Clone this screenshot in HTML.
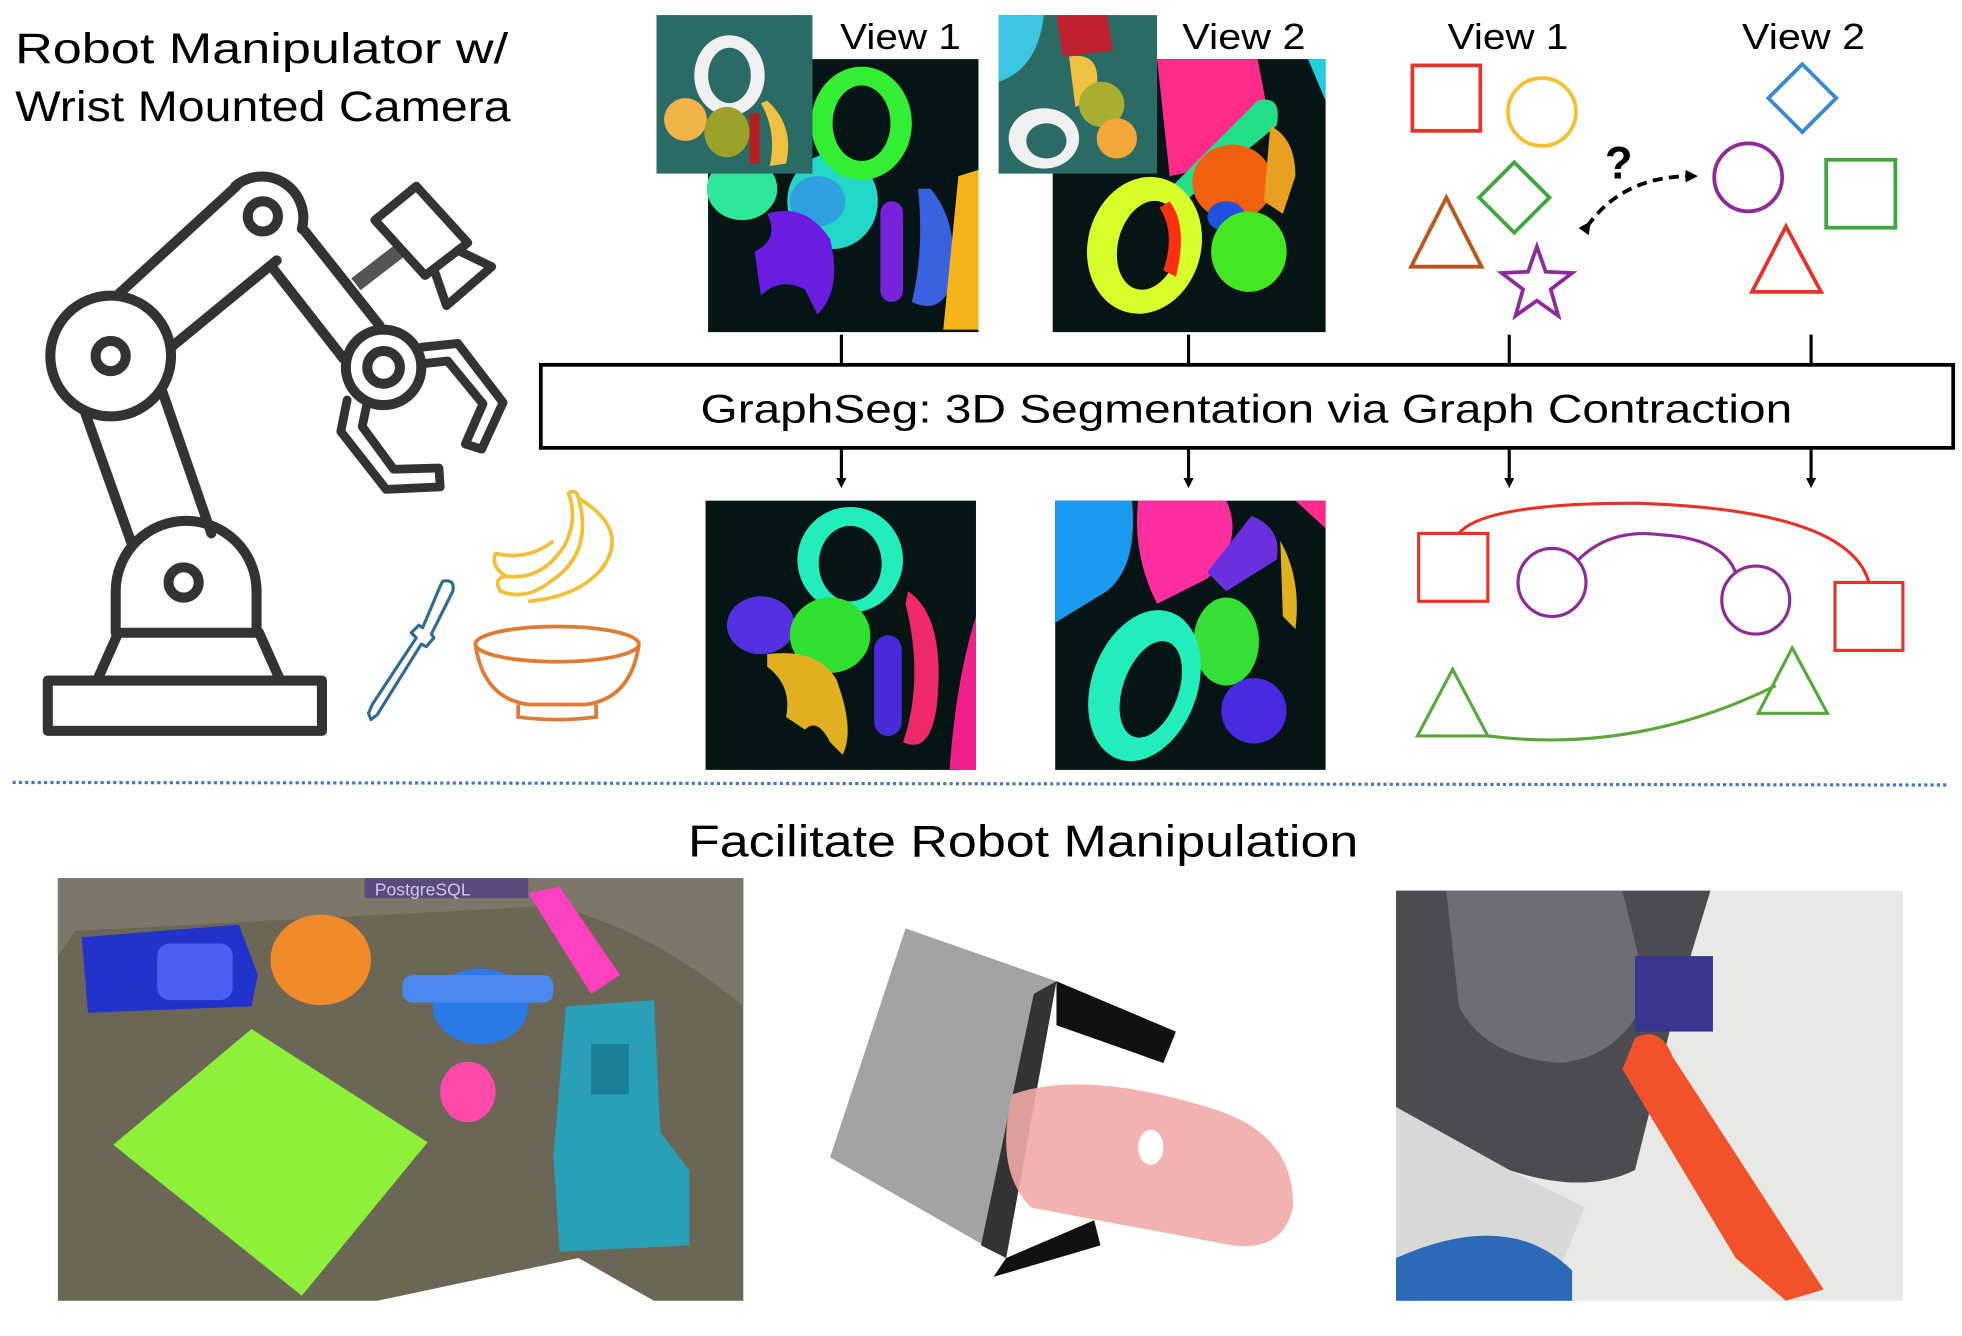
<!DOCTYPE html>
<html><head><meta charset="utf-8"><style>
html,body{margin:0;padding:0;background:#fff;width:1962px;height:1336px;overflow:hidden}
svg{display:block}
text{font-family:"Liberation Sans",sans-serif}
</style></head><body>
<svg width="1962" height="1336" viewBox="0 0 1560 1062" preserveAspectRatio="none" xmlns="http://www.w3.org/2000/svg">
<defs>
<marker id="ah" markerWidth="8" markerHeight="8" refX="4" refY="4" orient="auto" markerUnits="userSpaceOnUse"><path d="M0,0 L8,4 L0,8 Z" fill="#000"/></marker>
<marker id="ah2" markerWidth="10" markerHeight="10" refX="5" refY="5" orient="auto" markerUnits="userSpaceOnUse"><path d="M0,0 L10,5 L0,10 Z" fill="#000"/></marker>
</defs>
<rect width="1560" height="1062" fill="#fff"/>
<!-- title -->
<text x="12" y="50" font-size="34" fill="#000" textLength="392" lengthAdjust="spacingAndGlyphs">Robot Manipulator w/</text>
<text x="12" y="96" font-size="34" fill="#000" textLength="394" lengthAdjust="spacingAndGlyphs">Wrist Mounted Camera</text>

<!-- robot arm -->
<g fill="none" stroke="#333" stroke-width="8" stroke-linejoin="round" stroke-linecap="round">
<rect x="38" y="541" width="218" height="40"/>
<path d="M78,539 L94,503 L206,503 L222,539"/>
<path d="M92,503 L92,470 A56,56 0 0 1 204,470 L204,503"/>
<circle cx="146" cy="463" r="12"/>
<path d="M68,329 L105,433 M129,311 L168,424"/>
<circle cx="88" cy="283" r="48" fill="#fff"/>
<circle cx="88" cy="283" r="12"/>
<path d="M94,234 L188,148 M136,276 L220,207"/>
<path d="M187,148 A33,33 0 0 1 240,182"/>
<circle cx="209" cy="172" r="12"/>
<path d="M241,182 L302,259 M216,212 L273,285"/>
<circle cx="305" cy="292" r="30" fill="#fff"/>
<circle cx="305" cy="292" r="13"/>
<path d="M335,276 L364,273 L400,320 L383,357 L370,353 L384,321 L356,287 L337,289" stroke-width="7"/>
<path d="M276,318 L271,343 L307,389 L350,387 L349,372 L313,373 L288,339 L292,320" stroke-width="7"/>
<line x1="283" y1="226" x2="318" y2="199" stroke="#555" stroke-width="12" stroke-linecap="butt"/>
<path d="M298,175 L331,148 L372,193 L338,219 Z" stroke-width="7"/>
<path d="M345,214 L355,243 L391,212 L364,199" stroke-width="7"/>
</g>

<!-- screwdriver -->
<g fill="none" stroke="#2e6a92" stroke-width="2.5" stroke-linejoin="round">
<path d="M352,462 Q362,460 360,470 L343,504 L345,507 L339,514 L335,512 L300,568 L295,572 L293,567 L296,560 L331,507 L327,503 L333,497 L336,499 L350,466 Z"/>
</g>
<!-- banana -->
<g fill="none" stroke="#f2bf38" stroke-width="3" stroke-linejoin="round">
<path d="M452,392 Q458,388 460,396 Q472,440 438,462 Q418,478 398,470 Q392,460 402,458 Q430,462 448,435 Q460,414 452,392 Z"/>
<path d="M402,458 Q390,450 394,440 Q420,446 440,430"/>
<path d="M460,396 Q500,420 480,450 Q462,474 420,478"/>
</g>
<!-- bowl -->
<g fill="none" stroke="#e07a35" stroke-width="3">
<ellipse cx="443" cy="512" rx="65" ry="14"/>
<path d="M378,512 Q384,555 420,560 L466,560 Q502,555 508,512"/>
<path d="M412,560 L412,570 Q443,574 474,570 L474,560"/>
</g>

<!-- top view 1 seg -->
<rect x="563" y="47" width="215" height="217" fill="#051414"/>
<ellipse cx="590" cy="150" rx="28" ry="25" fill="#2ee89a"/>
<ellipse cx="662" cy="160" rx="36" ry="38" fill="#20d7c8"/>
<ellipse cx="650" cy="160" rx="22" ry="20" fill="#2ea0e0"/>
<path d="M610,170 Q640,160 660,190 Q670,230 650,250 L640,230 Q620,220 605,235 L600,200 Q620,190 610,170 Z" fill="#6a1de0"/>
<path d="M740,150 Q765,180 755,230 Q745,250 725,240 Q735,200 730,150 Z" fill="#3a62e0"/>
<rect x="700" y="160" width="18" height="80" rx="9" fill="#7722dd"/>
<path d="M762,140 L778,135 L778,262 L750,262 Z" fill="#f4b41a"/>
<ellipse cx="685" cy="98" rx="40" ry="45" fill="#33ee33"/>
<ellipse cx="685" cy="98" rx="23" ry="30" fill="#051414"/>
<!-- thumbnail 1 -->
<rect x="522" y="12" width="124" height="126" fill="#2b6b65"/>
<ellipse cx="580" cy="60" rx="28" ry="32" fill="#f0f0f0"/>
<ellipse cx="580" cy="60" rx="17" ry="22" fill="#2b6b65"/>
<circle cx="545" cy="95" r="17" fill="#f2b44a"/>
<ellipse cx="578" cy="105" rx="18" ry="20" fill="#9aa22a"/>
<path d="M610,80 Q632,100 625,130 L612,132 Q618,105 605,82 Z" fill="#f0c040"/>
<rect x="596" y="90" width="8" height="40" fill="#b32020"/>
<text x="668" y="39" font-size="29" textLength="96" lengthAdjust="spacingAndGlyphs">View 1</text>

<!-- top view 2 seg -->
<rect x="837" y="47" width="217" height="217" fill="#051414"/>
<path d="M920,47 L1000,47 L1010,100 L980,130 L930,140 Z" fill="#ff2a8a"/>
<path d="M1040,47 L1054,47 L1054,80 Z" fill="#20d0e0"/>
<path d="M1000,80 Q1020,75 1015,100 L930,170 L920,160 Z" fill="#22e08a"/>
<ellipse cx="980" cy="145" rx="32" ry="30" fill="#f06010"/>
<ellipse cx="975" cy="172" rx="15" ry="12" fill="#2050e0"/>
<ellipse cx="993" cy="200" rx="30" ry="32" fill="#44e822"/>
<path d="M1010,100 Q1030,110 1030,140 L1020,170 L1005,160 Z" fill="#e8a020"/>
<ellipse cx="910" cy="195" rx="45" ry="55" transform="rotate(15 910 195)" fill="#d8ff2a"/>
<ellipse cx="913" cy="195" rx="24" ry="36" transform="rotate(15 913 195)" fill="#051414"/>
<path d="M930,160 Q945,180 935,220 L925,215 Q935,185 922,165 Z" fill="#ff3010"/>
<!-- thumbnail 2 -->
<rect x="794" y="12" width="126" height="126" fill="#2b6b65"/>
<path d="M794,12 L830,12 Q825,55 794,65 Z" fill="#3bc5e0"/>
<path d="M840,12 L880,12 L885,40 L845,45 Z" fill="#c02030"/>
<path d="M850,45 Q880,40 870,80 L855,85 Z" fill="#f0c040"/>
<ellipse cx="830" cy="110" rx="28" ry="24" fill="#f0f0f0"/>
<ellipse cx="832" cy="112" rx="16" ry="14" fill="#2b6b65"/>
<ellipse cx="876" cy="83" rx="18" ry="18" fill="#a8ae30"/>
<ellipse cx="888" cy="110" rx="16" ry="16" fill="#f2a838"/>
<text x="940" y="39" font-size="29" textLength="98" lengthAdjust="spacingAndGlyphs">View 2</text>

<!-- shapes views -->
<text x="1151" y="39" font-size="29" textLength="96" lengthAdjust="spacingAndGlyphs">View 1</text>
<text x="1385" y="39" font-size="29" textLength="98" lengthAdjust="spacingAndGlyphs">View 2</text>
<g fill="none" stroke-width="3">
<rect x="1123" y="52" width="54" height="52" stroke="#e6332a"/>
<circle cx="1226" cy="89" r="27" stroke="#f4c12e"/>
<path d="M1204,129 L1232,157 L1204,185 L1176,157 Z" stroke="#3ea83e"/>
<path d="M1150,157 L1122,212 L1178,212 Z" stroke="#b8561c"/>
<path d="M1222,196 L1229,216 L1250,217 L1233,230 L1239,251 L1222,239 L1205,251 L1211,230 L1194,217 L1215,216 Z" stroke="#8e2a9a"/>
<path d="M1433,51 L1460,78 L1433,105 L1406,78 Z" stroke="#3a8ad0"/>
<circle cx="1390" cy="141" r="27" stroke="#8e2a9a"/>
<rect x="1452" y="127" width="55" height="54" stroke="#3ea83e"/>
<path d="M1420,180 L1393,232 L1448,232 Z" stroke="#e6332a"/>
<path d="M1262,180 Q1290,140 1345,140" stroke="#000" stroke-width="3" stroke-dasharray="8,5" marker-end="url(#ah2)" marker-start="url(#ah2)"/>
</g>
<text x="1287" y="142" font-size="36" font-weight="bold" text-anchor="middle">?</text>

<!-- connectors -->
<g stroke="#000" stroke-width="2.5">
<line x1="669" y1="266" x2="669" y2="290"/><line x1="945" y1="266" x2="945" y2="290"/>
<line x1="1200" y1="266" x2="1200" y2="290"/><line x1="1440" y1="266" x2="1440" y2="290"/>
<line x1="669" y1="356" x2="669" y2="384" marker-end="url(#ah)"/><line x1="945" y1="356" x2="945" y2="384" marker-end="url(#ah)"/>
<line x1="1200" y1="356" x2="1200" y2="384" marker-end="url(#ah)"/><line x1="1440" y1="356" x2="1440" y2="384" marker-end="url(#ah)"/>
</g>
<rect x="430" y="290" width="1123" height="66" fill="#fff" stroke="#000" stroke-width="3"/>
<text x="557" y="336" font-size="32" textLength="868" lengthAdjust="spacingAndGlyphs">GraphSeg: 3D Segmentation via Graph Contraction</text>

<!-- bottom seg 1 -->
<rect x="561" y="398" width="215" height="214" fill="#051414"/>
<ellipse cx="676" cy="445" rx="42" ry="42" fill="#22eebb"/>
<ellipse cx="676" cy="448" rx="25" ry="30" fill="#051414"/>
<ellipse cx="605" cy="497" rx="27" ry="23" fill="#5530e0"/>
<ellipse cx="660" cy="505" rx="32" ry="30" fill="#30e030"/>
<path d="M610,520 Q650,515 665,540 Q680,580 670,600 L660,590 Q650,570 640,580 L625,570 Q630,545 610,530 Z" fill="#e0b020"/>
<rect x="695" y="505" width="22" height="80" rx="11" fill="#4a2ad8"/>
<path d="M722,470 Q752,490 745,560 Q740,600 718,590 Q735,540 720,480 Z" fill="#f02a6a"/>
<path d="M776,490 L776,612 L755,612 Q760,540 776,490 Z" fill="#f0208a"/>
<!-- bottom seg 2 -->
<rect x="839" y="398" width="215" height="214" fill="#051414"/>
<path d="M839,398 L900,398 Q905,450 880,470 L839,495 Z" fill="#1a9af0"/>
<path d="M905,398 L975,398 Q990,430 960,460 L920,480 Q900,440 905,398 Z" fill="#ff2ea0"/>
<path d="M995,410 Q1020,420 1015,445 L975,470 L960,455 Z" fill="#6a30e0"/>
<path d="M1030,398 L1054,398 L1054,420 Z" fill="#ff2a8a"/>
<ellipse cx="975" cy="510" rx="26" ry="35" fill="#33e033"/>
<ellipse cx="997" cy="565" rx="26" ry="26" fill="#4a2ae0"/>
<path d="M1018,430 Q1035,460 1030,500 L1020,490 Z" fill="#e0b020"/>
<ellipse cx="910" cy="545" rx="42" ry="62" transform="rotate(20 910 545)" fill="#22eebb"/>
<ellipse cx="915" cy="548" rx="22" ry="40" transform="rotate(20 915 548)" fill="#051414"/>

<!-- graph -->
<g fill="none" stroke-width="2.5">
<path d="M1160,424 Q1180,400 1300,400 Q1470,405 1486,463" stroke="#e6332a"/>
<path d="M1255,445 Q1280,420 1320,425 Q1370,428 1380,455" stroke="#8e2a9a"/>
<path d="M1183,585 Q1300,600 1412,545" stroke="#5aa83a"/>
<rect x="1128" y="424" width="55" height="54" stroke="#e6332a"/>
<circle cx="1234" cy="463" r="27" stroke="#8e2a9a"/>
<circle cx="1396" cy="477" r="27" stroke="#8e2a9a"/>
<rect x="1459" y="463" width="54" height="54" stroke="#e6332a"/>
<path d="M1155,532 L1127,585 L1183,585 Z" stroke="#5aa83a"/>
<path d="M1425,515 L1398,567 L1453,567 Z" stroke="#5aa83a"/>
</g>

<!-- dotted line -->
<line x1="10" y1="622" x2="1550" y2="624" stroke="#4472c4" stroke-width="2.5" stroke-dasharray="2.5,2.5"/>
<text x="547" y="681" font-size="35" textLength="533" lengthAdjust="spacingAndGlyphs">Facilitate Robot Manipulation</text>

<!-- bottom left photo -->
<path d="M46,698 L591,698 L591,1034 L520,1034 L460,1000 L300,1034 L46,1034 Z" fill="#6b6656"/>
<path d="M46,698 L591,698 L591,800 Q520,740 440,720 L60,740 L46,760 Z" fill="#7c7768"/>
<rect x="290" y="698" width="130" height="16" fill="#5a4a80"/>
<text x="298" y="712" font-size="14" font-family="Liberation Serif" fill="#cfc8e8">PostgreSQL</text>
<path d="M65,745 L190,735 L205,775 L200,800 L70,805 Z" fill="#2233cc"/>
<rect x="125" y="750" width="60" height="45" rx="10" fill="#4a60ee"/>
<ellipse cx="255" cy="763" rx="40" ry="36" fill="#f08a2a"/>
<path d="M420,710 L445,705 L493,775 L470,790 Z" fill="#ff40c0"/>
<ellipse cx="382" cy="800" rx="38" ry="30" fill="#2a7ae8"/>
<rect x="320" y="775" width="120" height="22" rx="8" fill="#4a88ee"/>
<ellipse cx="372" cy="868" rx="22" ry="24" fill="#ff4aaa"/>
<path d="M90,910 L200,818 L340,908 L240,1030 Z" fill="#8ef038"/>
<path d="M450,800 L520,795 L525,900 L548,930 L548,990 L445,995 L440,920 Z" fill="#2aa0b8"/>
<rect x="470" y="830" width="30" height="40" fill="#1a8098"/>

<!-- middle render -->
<path d="M720,738 L840,780 L800,1000 L660,920 Z" fill="#a3a3a3"/>
<path d="M840,780 L935,820 L925,845 L840,815 Z" fill="#111"/>
<path d="M822,790 L840,780 L800,1000 L780,990 Z" fill="#333"/>
<path d="M800,1000 L870,970 L875,990 L790,1015 Z" fill="#111"/>
<path d="M805,870 Q860,850 960,880 Q1030,900 1028,960 Q1020,995 980,990 L820,960 Q790,930 805,870 Z" fill="#f1aaa6" opacity="0.9"/>
<ellipse cx="915" cy="912" rx="10" ry="14" fill="#fff"/>

<!-- right photo -->
<rect x="1110" y="708" width="403" height="326" fill="#e8e8e6"/>
<path d="M1110,708 L1360,708 L1335,790 L1300,930 Q1260,950 1200,930 L1110,880 Z" fill="#4a4c52"/>
<path d="M1150,708 L1290,708 L1310,790 Q1290,840 1240,845 Q1180,840 1160,800 Z" fill="#6c6e74"/>
<path d="M1110,880 L1200,930 L1260,960 L1230,1034 L1110,1034 Z" fill="#d8d8d6"/>
<rect x="1300" y="760" width="62" height="60" fill="#3a3690"/>
<path d="M1300,825 Q1320,815 1330,840 L1450,1025 L1420,1034 L1380,1000 L1290,850 Z" fill="#f2522a"/>
<path d="M1110,1000 Q1200,960 1250,1010 L1250,1034 L1110,1034 Z" fill="#2a6ab8"/>
</svg>
</body></html>
